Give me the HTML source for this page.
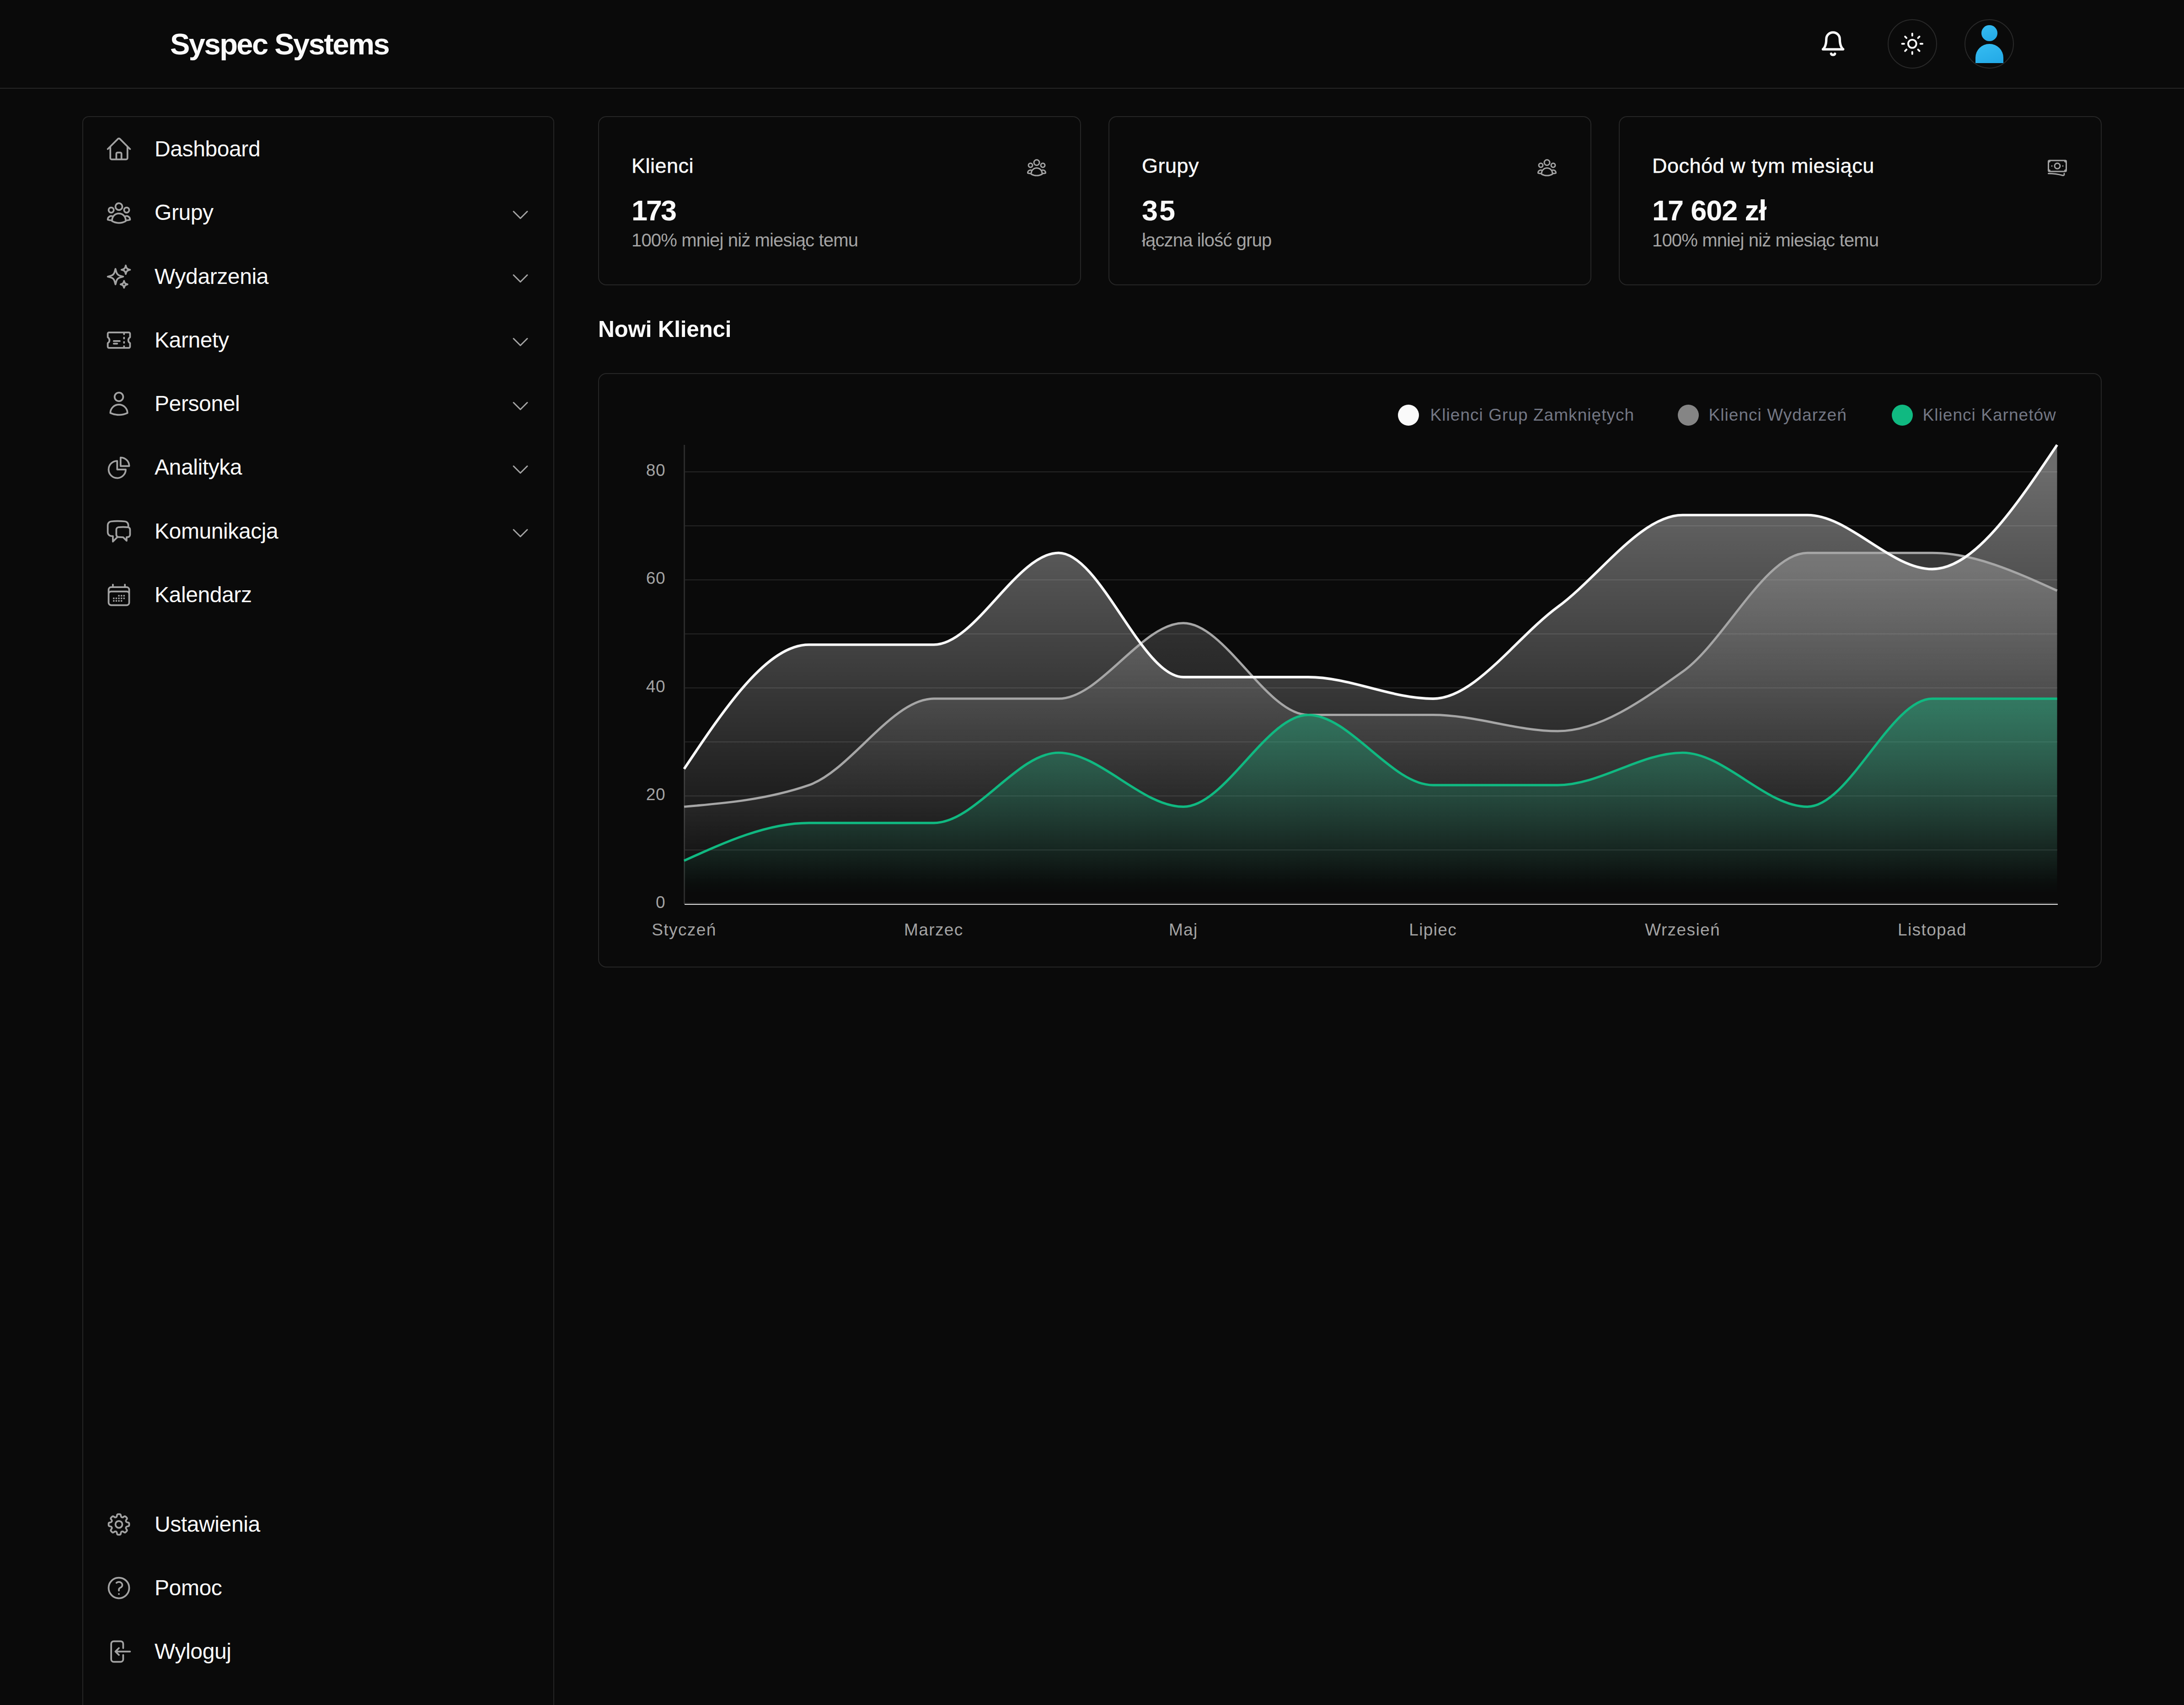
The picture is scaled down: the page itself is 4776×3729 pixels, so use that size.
<!DOCTYPE html><html><head><meta charset="utf-8"><style>
html,body{margin:0;padding:0;background:#0a0a0a;width:4776px;height:3729px;overflow:hidden;}
body{position:relative;font-family:"Liberation Sans", sans-serif;}
.t{position:absolute;line-height:1;white-space:nowrap;}
.box{position:absolute;box-sizing:border-box;border:2px solid #262626;border-radius:24px;}
</style></head><body>
<div style="position:absolute;left:0;top:192px;width:4776px;height:2px;background:#262626"></div>
<div class="t" style="left:372.0px;top:64.0px;font-size:65.0px;color:#fafafa;font-weight:700;letter-spacing:-2.50px;">Syspec Systems</div>
<svg style="position:absolute;left:3979.0px;top:66.0px;width:59px;height:59px" viewBox="0 0 24 24" fill="none" stroke="#fafafa" stroke-width="2.15" stroke-linecap="round" stroke-linejoin="round"><path d="M6 8a6 6 0 0 1 12 0c0 7 3 9 3 9H3s3-2 3-9"/><path d="M10.3 21a1.94 1.94 0 0 0 3.4 0"/></svg>
<div style="position:absolute;left:4128px;top:42px;width:108px;height:108px;box-sizing:border-box;border:2px solid #292929;border-radius:50%"></div>
<svg style="position:absolute;left:4155.2px;top:69.2px;width:53.5px;height:53.5px" viewBox="0 0 24 24" fill="none" stroke="#fafafa" stroke-width="1.75" stroke-linecap="round" stroke-linejoin="round"><circle cx="12" cy="12" r="4"/><path d="M12 2v2"/><path d="M12 20v2"/><path d="m4.93 4.93 1.41 1.41"/><path d="m17.66 17.66 1.41 1.41"/><path d="M2 12h2"/><path d="M20 12h2"/><path d="m6.34 17.66-1.41 1.41"/><path d="m19.07 4.93-1.41 1.41"/></svg>
<div style="position:absolute;left:4296px;top:42px;width:108px;height:108px;box-sizing:border-box;border:2px solid #292929;border-radius:50%"></div>
<div style="position:absolute;left:4333px;top:54.5px;width:34.5px;height:35px;border-radius:50%;background:linear-gradient(160deg,#36bdf2,#22a8e6)"></div>
<div style="position:absolute;left:4319.5px;top:96px;width:61px;height:41.5px;border-radius:30.5px 30.5px 0 0/30px 30px 0 0;background:linear-gradient(160deg,#36bdf2,#22a8e6)"></div>
<div class="box" style="left:180px;top:254px;width:1032px;height:3600px;border-color:#242424;border-radius:14px"></div>
<svg style="position:absolute;left:230.0px;top:296.0px;width:60.0px;height:60.0px" viewBox="0 0 24 24" fill="none" stroke="#a3a3a3" stroke-width="1.50" stroke-linecap="round" stroke-linejoin="round"><path d="m2.25 12 8.954-8.955c.44-.439 1.152-.439 1.591 0L21.75 12M4.5 9.75v10.125c0 .621.504 1.125 1.125 1.125H9.75v-4.875c0-.621.504-1.125 1.125-1.125h2.25c.621 0 1.125.504 1.125 1.125V21h4.125c.621 0 1.125-.504 1.125-1.125V9.75M8.25 21h8.25"/></svg>
<div class="t" style="left:338.0px;top:301.9px;font-size:48.0px;color:#fafafa;font-weight:400;letter-spacing:-0.40px;">Dashboard</div>
<svg style="position:absolute;left:230.0px;top:435.3px;width:60.0px;height:60.0px" viewBox="0 0 24 24" fill="none" stroke="#a3a3a3" stroke-width="1.50" stroke-linecap="round" stroke-linejoin="round"><path d="M18 18.72a9.094 9.094 0 0 0 3.741-.479 3 3 0 0 0-4.682-2.72m.94 3.198.001.031c0 .225-.012.447-.037.666A11.944 11.944 0 0 1 12 21c-2.17 0-4.207-.576-5.963-1.584A6.062 6.062 0 0 1 6 18.719m12 0a5.971 5.971 0 0 0-.941-3.197m0 0A5.995 5.995 0 0 0 12 12.75a5.995 5.995 0 0 0-5.058 2.772m0 0a3 3 0 0 0-4.681 2.72 8.986 8.986 0 0 0 3.74.477m.94-3.197a5.971 5.971 0 0 0-.94 3.197M15 6.75a3 3 0 1 1-6 0 3 3 0 0 1 6 0Zm6 3a2.25 2.25 0 1 1-4.5 0 2.25 2.25 0 0 1 4.5 0Zm-13.5 0a2.25 2.25 0 1 1-4.5 0 2.25 2.25 0 0 1 4.5 0Z"/></svg>
<div class="t" style="left:338.0px;top:441.2px;font-size:48.0px;color:#fafafa;font-weight:400;letter-spacing:-0.40px;">Grupy</div>
<svg style="position:absolute;left:1114.0px;top:445.8px;width:48.0px;height:48.0px" viewBox="0 0 24 24" fill="none" stroke="#a3a3a3" stroke-width="1.50" stroke-linecap="round" stroke-linejoin="round"><path d="m19.5 8.25-7.5 7.5-7.5-7.5"/></svg>
<svg style="position:absolute;left:230.0px;top:574.6px;width:60.0px;height:60.0px" viewBox="0 0 24 24" fill="none" stroke="#a3a3a3" stroke-width="1.50" stroke-linecap="round" stroke-linejoin="round"><path d="M9.813 15.904 9 18.75l-.813-2.846a4.5 4.5 0 0 0-3.09-3.09L2.25 12l2.846-.813a4.5 4.5 0 0 0 3.09-3.09L9 5.25l.813 2.846a4.5 4.5 0 0 0 3.09 3.09L15.75 12l-2.846.813a4.5 4.5 0 0 0-3.09 3.09ZM18.259 8.715 18 9.75l-.259-1.035a3.375 3.375 0 0 0-2.455-2.456L14.25 6l1.036-.259a3.375 3.375 0 0 0 2.455-2.456L18 2.25l.259 1.035a3.375 3.375 0 0 0 2.456 2.456L21.75 6l-1.035.259a3.375 3.375 0 0 0-2.456 2.456ZM16.894 20.567 16.5 21.75l-.394-1.183a2.25 2.25 0 0 0-1.423-1.423L13.5 18.75l1.183-.394a2.25 2.25 0 0 0 1.423-1.423l.394-1.183.394 1.183a2.25 2.25 0 0 0 1.423 1.423l1.183.394-1.183.394a2.25 2.25 0 0 0-1.423 1.423Z"/></svg>
<div class="t" style="left:338.0px;top:580.5px;font-size:48.0px;color:#fafafa;font-weight:400;letter-spacing:-0.40px;">Wydarzenia</div>
<svg style="position:absolute;left:1114.0px;top:585.1px;width:48.0px;height:48.0px" viewBox="0 0 24 24" fill="none" stroke="#a3a3a3" stroke-width="1.50" stroke-linecap="round" stroke-linejoin="round"><path d="m19.5 8.25-7.5 7.5-7.5-7.5"/></svg>
<svg style="position:absolute;left:230.0px;top:713.9px;width:60.0px;height:60.0px" viewBox="0 0 24 24" fill="none" stroke="#a3a3a3" stroke-width="1.50" stroke-linecap="round" stroke-linejoin="round"><path d="M16.5 6v.75m0 3v.75m0 3v.75m0 3V18m-9-5.25h5.25M7.5 15h3M3.375 5.25c-.621 0-1.125.504-1.125 1.125v3.026a2.999 2.999 0 0 1 0 5.198v3.026c0 .621.504 1.125 1.125 1.125h17.25c.621 0 1.125-.504 1.125-1.125v-3.026a2.999 2.999 0 0 1 0-5.198V6.375c0-.621-.504-1.125-1.125-1.125H3.375Z"/></svg>
<div class="t" style="left:338.0px;top:719.8px;font-size:48.0px;color:#fafafa;font-weight:400;letter-spacing:-0.40px;">Karnety</div>
<svg style="position:absolute;left:1114.0px;top:724.4px;width:48.0px;height:48.0px" viewBox="0 0 24 24" fill="none" stroke="#a3a3a3" stroke-width="1.50" stroke-linecap="round" stroke-linejoin="round"><path d="m19.5 8.25-7.5 7.5-7.5-7.5"/></svg>
<svg style="position:absolute;left:230.0px;top:853.2px;width:60.0px;height:60.0px" viewBox="0 0 24 24" fill="none" stroke="#a3a3a3" stroke-width="1.50" stroke-linecap="round" stroke-linejoin="round"><path d="M15.75 6a3.75 3.75 0 1 1-7.5 0 3.75 3.75 0 0 1 7.5 0ZM4.501 20.118a7.5 7.5 0 0 1 14.998 0A17.933 17.933 0 0 1 12 21.75c-2.676 0-5.216-.584-7.499-1.632Z"/></svg>
<div class="t" style="left:338.0px;top:859.1px;font-size:48.0px;color:#fafafa;font-weight:400;letter-spacing:-0.40px;">Personel</div>
<svg style="position:absolute;left:1114.0px;top:863.7px;width:48.0px;height:48.0px" viewBox="0 0 24 24" fill="none" stroke="#a3a3a3" stroke-width="1.50" stroke-linecap="round" stroke-linejoin="round"><path d="m19.5 8.25-7.5 7.5-7.5-7.5"/></svg>
<svg style="position:absolute;left:230.0px;top:992.5px;width:60.0px;height:60.0px" viewBox="0 0 24 24" fill="none" stroke="#a3a3a3" stroke-width="1.50" stroke-linecap="round" stroke-linejoin="round"><path d="M10.5 6a7.5 7.5 0 1 0 7.5 7.5h-7.5V6Z M13.5 10.5H21A7.5 7.5 0 0 0 13.5 3v7.5Z"/></svg>
<div class="t" style="left:338.0px;top:998.4px;font-size:48.0px;color:#fafafa;font-weight:400;letter-spacing:-0.40px;">Analityka</div>
<svg style="position:absolute;left:1114.0px;top:1003.0px;width:48.0px;height:48.0px" viewBox="0 0 24 24" fill="none" stroke="#a3a3a3" stroke-width="1.50" stroke-linecap="round" stroke-linejoin="round"><path d="m19.5 8.25-7.5 7.5-7.5-7.5"/></svg>
<svg style="position:absolute;left:230.0px;top:1131.8px;width:60.0px;height:60.0px" viewBox="0 0 24 24" fill="none" stroke="#a3a3a3" stroke-width="1.50" stroke-linecap="round" stroke-linejoin="round"><path d="M20.25 8.511c.884.284 1.5 1.128 1.5 2.097v4.286c0 1.136-.847 2.1-1.98 2.193-.34.027-.68.052-1.02.072v3.091l-3-3c-1.354 0-2.694-.055-4.02-.163a2.115 2.115 0 0 1-.825-.242m9.345-8.334a2.126 2.126 0 0 0-.476-.095 48.64 48.64 0 0 0-8.048 0c-1.131.094-1.976 1.057-1.976 2.192v4.286c0 .837.46 1.58 1.155 1.951m9.345-8.334V6.637c0-1.621-1.152-3.026-2.76-3.235A48.455 48.455 0 0 0 11.25 3c-2.115 0-4.198.137-6.24.402-1.608.209-2.76 1.614-2.76 3.235v6.226c0 1.621 1.152 3.026 2.76 3.235.577.075 1.157.14 1.74.194V21l4.155-4.155"/></svg>
<div class="t" style="left:338.0px;top:1137.7px;font-size:48.0px;color:#fafafa;font-weight:400;letter-spacing:-0.40px;">Komunikacja</div>
<svg style="position:absolute;left:1114.0px;top:1142.3px;width:48.0px;height:48.0px" viewBox="0 0 24 24" fill="none" stroke="#a3a3a3" stroke-width="1.50" stroke-linecap="round" stroke-linejoin="round"><path d="m19.5 8.25-7.5 7.5-7.5-7.5"/></svg>
<svg style="position:absolute;left:230.0px;top:1271.1px;width:60.0px;height:60.0px" viewBox="0 0 24 24" fill="none" stroke="#a3a3a3" stroke-width="1.50" stroke-linecap="round" stroke-linejoin="round"><path d="M6.75 3v2.25M17.25 3v2.25M3 18.75V7.5a2.25 2.25 0 0 1 2.25-2.25h13.5A2.25 2.25 0 0 1 21 7.5v11.25m-18 0A2.25 2.25 0 0 0 5.25 21h13.5A2.25 2.25 0 0 0 21 18.75m-18 0v-7.5A2.25 2.25 0 0 1 5.25 9h13.5A2.25 2.25 0 0 1 21 11.25v7.5m-9-6h.008v.008H12v-.008ZM12 15h.008v.008H12V15Zm0 2.25h.008v.008H12v-.008ZM9.75 15h.008v.008H9.75V15Zm0 2.25h.008v.008H9.75v-.008ZM7.5 15h.008v.008H7.5V15Zm0 2.25h.008v.008H7.5v-.008Zm6.75-4.5h.008v.008h-.008v-.008Zm0 2.25h.008v.008h-.008V15Zm0 2.25h.008v.008h-.008v-.008Zm2.25-4.5h.008v.008H16.5v-.008Zm0 2.25h.008v.008H16.5V15Z"/></svg>
<div class="t" style="left:338.0px;top:1277.0px;font-size:48.0px;color:#fafafa;font-weight:400;letter-spacing:-0.40px;">Kalendarz</div>
<svg style="position:absolute;left:230.0px;top:3304.0px;width:60.0px;height:60.0px" viewBox="0 0 24 24" fill="none" stroke="#a3a3a3" stroke-width="1.50" stroke-linecap="round" stroke-linejoin="round"><path d="M10.343 3.94c.09-.542.56-.94 1.11-.94h1.093c.55 0 1.02.398 1.11.94l.149.894c.07.424.384.764.78.93.398.164.855.142 1.205-.108l.737-.527a1.125 1.125 0 0 1 1.45.12l.773.774c.39.389.44 1.002.12 1.45l-.527.737c-.25.35-.272.806-.107 1.204.165.397.505.71.93.78l.893.15c.543.09.94.559.94 1.109v1.094c0 .55-.397 1.02-.94 1.11l-.894.149c-.424.07-.764.383-.929.78-.165.398-.143.854.107 1.204l.527.738c.32.447.269 1.06-.12 1.45l-.774.773a1.125 1.125 0 0 1-1.449.12l-.738-.527c-.35-.25-.806-.272-1.203-.107-.398.165-.71.505-.781.929l-.149.894c-.09.542-.56.94-1.11.94h-1.094c-.55 0-1.019-.398-1.11-.94l-.148-.894c-.071-.424-.384-.764-.781-.93-.398-.164-.854-.142-1.204.108l-.738.527c-.447.32-1.06.269-1.45-.12l-.773-.774a1.125 1.125 0 0 1-.12-1.45l.527-.737c.25-.35.272-.806.108-1.204-.165-.397-.506-.71-.93-.78l-.894-.15c-.542-.09-.94-.56-.94-1.109v-1.094c0-.55.398-1.02.94-1.11l.894-.149c.424-.07.765-.383.93-.78.165-.398.143-.854-.108-1.204l-.526-.738a1.125 1.125 0 0 1 .12-1.45l.773-.773a1.125 1.125 0 0 1 1.45-.12l.737.527c.35.25.807.272 1.204.107.397-.165.71-.505.78-.929l.15-.894Z M15 12a3 3 0 1 1-6 0 3 3 0 0 1 6 0Z"/></svg>
<div class="t" style="left:338.0px;top:3309.9px;font-size:48.0px;color:#fafafa;font-weight:400;letter-spacing:-0.40px;">Ustawienia</div>
<svg style="position:absolute;left:230.0px;top:3443.0px;width:60.0px;height:60.0px" viewBox="0 0 24 24" fill="none" stroke="#a3a3a3" stroke-width="1.50" stroke-linecap="round" stroke-linejoin="round"><path d="M9.879 7.519c1.171-1.025 3.071-1.025 4.242 0 1.172 1.025 1.172 2.687 0 3.712-.203.179-.43.326-.67.442-.745.361-1.45.999-1.45 1.827v.75M21 12a9 9 0 1 1-18 0 9 9 0 0 1 18 0Zm-9 5.25h.008v.008H12v-.008Z"/></svg>
<div class="t" style="left:338.0px;top:3448.9px;font-size:48.0px;color:#fafafa;font-weight:400;letter-spacing:-0.40px;">Pomoc</div>
<svg style="position:absolute;left:230.0px;top:3582.0px;width:60.0px;height:60.0px" viewBox="0 0 24 24" fill="none" stroke="#a3a3a3" stroke-width="1.50" stroke-linecap="round" stroke-linejoin="round"><path d="M15.75 9V5.25A2.25 2.25 0 0 0 13.5 3h-6a2.25 2.25 0 0 0-2.25 2.25v13.5A2.25 2.25 0 0 0 7.5 21h6a2.25 2.25 0 0 0 2.25-2.25V15M12 9l-3 3m0 0 3 3m-3-3h12.75"/></svg>
<div class="t" style="left:338.0px;top:3587.9px;font-size:48.0px;color:#fafafa;font-weight:400;letter-spacing:-0.40px;">Wyloguj</div>
<div class="box" style="left:1308px;top:254px;width:1056px;height:370px;border-radius:18px"></div>
<div class="t" style="left:1381.0px;top:340.4px;font-size:45.0px;color:#fafafa;font-weight:400;letter-spacing:0.50px;-webkit-text-stroke:0.5px #fafafa;">Klienci</div>
<div class="t" style="left:1381.0px;top:428.7px;font-size:63.0px;color:#fafafa;font-weight:700;letter-spacing:-3.00px;">173</div>
<div class="t" style="left:1381.0px;top:504.6px;font-size:40.0px;color:#a3a3a3;font-weight:400;letter-spacing:-0.85px;">100% mniej niż miesiąc temu</div>
<svg style="position:absolute;left:2243.0px;top:342.0px;width:48.0px;height:48.0px" viewBox="0 0 24 24" fill="none" stroke="#a3a3a3" stroke-width="1.50" stroke-linecap="round" stroke-linejoin="round"><path d="M18 18.72a9.094 9.094 0 0 0 3.741-.479 3 3 0 0 0-4.682-2.72m.94 3.198.001.031c0 .225-.012.447-.037.666A11.944 11.944 0 0 1 12 21c-2.17 0-4.207-.576-5.963-1.584A6.062 6.062 0 0 1 6 18.719m12 0a5.971 5.971 0 0 0-.941-3.197m0 0A5.995 5.995 0 0 0 12 12.75a5.995 5.995 0 0 0-5.058 2.772m0 0a3 3 0 0 0-4.681 2.72 8.986 8.986 0 0 0 3.74.477m.94-3.197a5.971 5.971 0 0 0-.94 3.197M15 6.75a3 3 0 1 1-6 0 3 3 0 0 1 6 0Zm6 3a2.25 2.25 0 1 1-4.5 0 2.25 2.25 0 0 1 4.5 0Zm-13.5 0a2.25 2.25 0 1 1-4.5 0 2.25 2.25 0 0 1 4.5 0Z"/></svg>
<div class="box" style="left:2424px;top:254px;width:1056px;height:370px;border-radius:18px"></div>
<div class="t" style="left:2497.0px;top:340.4px;font-size:45.0px;color:#fafafa;font-weight:400;letter-spacing:0.50px;-webkit-text-stroke:0.5px #fafafa;">Grupy</div>
<div class="t" style="left:2497.0px;top:428.7px;font-size:63.0px;color:#fafafa;font-weight:700;letter-spacing:3.00px;">35</div>
<div class="t" style="left:2497.0px;top:504.6px;font-size:40.0px;color:#a3a3a3;font-weight:400;letter-spacing:-0.85px;">łączna ilość grup</div>
<svg style="position:absolute;left:3359.0px;top:342.0px;width:48.0px;height:48.0px" viewBox="0 0 24 24" fill="none" stroke="#a3a3a3" stroke-width="1.50" stroke-linecap="round" stroke-linejoin="round"><path d="M18 18.72a9.094 9.094 0 0 0 3.741-.479 3 3 0 0 0-4.682-2.72m.94 3.198.001.031c0 .225-.012.447-.037.666A11.944 11.944 0 0 1 12 21c-2.17 0-4.207-.576-5.963-1.584A6.062 6.062 0 0 1 6 18.719m12 0a5.971 5.971 0 0 0-.941-3.197m0 0A5.995 5.995 0 0 0 12 12.75a5.995 5.995 0 0 0-5.058 2.772m0 0a3 3 0 0 0-4.681 2.72 8.986 8.986 0 0 0 3.74.477m.94-3.197a5.971 5.971 0 0 0-.94 3.197M15 6.75a3 3 0 1 1-6 0 3 3 0 0 1 6 0Zm6 3a2.25 2.25 0 1 1-4.5 0 2.25 2.25 0 0 1 4.5 0Zm-13.5 0a2.25 2.25 0 1 1-4.5 0 2.25 2.25 0 0 1 4.5 0Z"/></svg>
<div class="box" style="left:3540px;top:254px;width:1056px;height:370px;border-radius:18px"></div>
<div class="t" style="left:3613.0px;top:340.4px;font-size:45.0px;color:#fafafa;font-weight:400;letter-spacing:0.50px;-webkit-text-stroke:0.5px #fafafa;">Dochód w tym miesiącu</div>
<div class="t" style="left:3613.0px;top:428.7px;font-size:63.0px;color:#fafafa;font-weight:700;letter-spacing:-1.10px;">17 602 zł</div>
<div class="t" style="left:3613.0px;top:504.6px;font-size:40.0px;color:#a3a3a3;font-weight:400;letter-spacing:-0.85px;">100% mniej niż miesiąc temu</div>
<svg style="position:absolute;left:4475.0px;top:342.0px;width:48.0px;height:48.0px" viewBox="0 0 24 24" fill="none" stroke="#a3a3a3" stroke-width="1.50" stroke-linecap="round" stroke-linejoin="round"><path d="M2.25 18.75a60.07 60.07 0 0 1 15.797 2.101c.727.198 1.453-.342 1.453-1.096V18.75M3.75 4.5v.75A.75.75 0 0 1 3 6h-.75m0 0v-.375c0-.621.504-1.125 1.125-1.125H20.25M2.25 6v9m18-10.5v.75c0 .414.336.75.75.75h.75m-1.5-1.5h.375c.621 0 1.125.504 1.125 1.125v9.75c0 .621-.504 1.125-1.125 1.125h-.375m1.5-1.5H21a.75.75 0 0 0-.75.75v.75m0 0H3.75m0 0h-.375a1.125 1.125 0 0 1-1.125-1.125V15m1.5 1.5v-.75A.75.75 0 0 0 3 15h-.75M15 10.5a3 3 0 1 1-6 0 3 3 0 0 1 6 0Zm3 0h.008v.008H18V10.5Zm-12 0h.008v.008H6V10.5Z"/></svg>
<div class="t" style="left:1308.0px;top:694.6px;font-size:49.5px;color:#fafafa;font-weight:700;letter-spacing:-0.25px;">Nowi Klienci</div>
<div class="box" style="left:1308px;top:816px;width:3288px;height:1300px;border-radius:18px"></div>
<div style="position:absolute;left:3057px;top:885px;width:46px;height:46px;border-radius:50%;background:#fafafa"></div>
<div class="t" style="left:3127.5px;top:888.5px;font-size:37.0px;color:#737784;font-weight:400;letter-spacing:1.05px;">Klienci Grup Zamkniętych</div>
<div style="position:absolute;left:3669px;top:885px;width:46px;height:46px;border-radius:50%;background:#858585"></div>
<div class="t" style="left:3736.5px;top:888.5px;font-size:37.0px;color:#737784;font-weight:400;letter-spacing:1.05px;">Klienci Wydarzeń</div>
<div style="position:absolute;left:4137px;top:885px;width:46px;height:46px;border-radius:50%;background:#10b981"></div>
<div class="t" style="left:4204.5px;top:888.5px;font-size:37.0px;color:#737784;font-weight:400;letter-spacing:1.05px;">Klienci Karnetów</div>
<svg style="position:absolute;left:0;top:0" width="4776" height="3729" viewBox="0 0 4776 3729"><defs><linearGradient id="gw" x1="0" y1="0" x2="0" y2="1"><stop offset="5%" stop-color="#ffffff" stop-opacity="0.4"/><stop offset="95%" stop-color="#ffffff" stop-opacity="0"/></linearGradient><linearGradient id="gg" x1="0" y1="0" x2="0" y2="1"><stop offset="5%" stop-color="#a3a3a3" stop-opacity="0.3"/><stop offset="95%" stop-color="#a3a3a3" stop-opacity="0"/></linearGradient><linearGradient id="ge" x1="0" y1="0" x2="0" y2="1"><stop offset="5%" stop-color="#10b981" stop-opacity="0.4"/><stop offset="95%" stop-color="#10b981" stop-opacity="0"/></linearGradient></defs><rect x="1496" y="1857.9" width="3003" height="2" fill="#262626"/><rect x="1496" y="1739.8" width="3003" height="2" fill="#262626"/><rect x="1496" y="1621.6" width="3003" height="2" fill="#262626"/><rect x="1496" y="1503.5" width="3003" height="2" fill="#262626"/><rect x="1496" y="1385.4" width="3003" height="2" fill="#262626"/><rect x="1496" y="1267.2" width="3003" height="2" fill="#262626"/><rect x="1496" y="1149.1" width="3003" height="2" fill="#262626"/><rect x="1496" y="1031.0" width="3003" height="2" fill="#262626"/><rect x="1495" y="973" width="3" height="1004" fill="#2c2c2c"/><path d="M1496.00,1764.38C1586.98,1756.50 1677.97,1748.62 1768.95,1717.12C1859.94,1685.62 1950.92,1528.12 2041.91,1528.12C2132.89,1528.12 2223.88,1528.12 2314.86,1528.12C2405.85,1528.12 2496.83,1362.75 2587.82,1362.75C2678.80,1362.75 2769.79,1563.56 2860.77,1563.56C2951.76,1563.56 3042.74,1563.56 3133.73,1563.56C3224.71,1563.56 3315.70,1599.00 3406.68,1599.00C3497.67,1599.00 3588.65,1534.03 3679.64,1469.06C3770.62,1404.09 3861.61,1209.19 3952.59,1209.19C4043.58,1209.19 4134.56,1209.19 4225.55,1209.19C4316.53,1209.19 4407.52,1250.53 4498.50,1291.88L4498.50,1977.00L1496.00,1977.00Z" fill="url(#gg)"/><path d="M1496.00,1681.69C1586.98,1545.84 1677.97,1410.00 1768.95,1410.00C1859.94,1410.00 1950.92,1410.00 2041.91,1410.00C2132.89,1410.00 2223.88,1209.19 2314.86,1209.19C2405.85,1209.19 2496.83,1480.88 2587.82,1480.88C2678.80,1480.88 2769.79,1480.88 2860.77,1480.88C2951.76,1480.88 3042.74,1528.12 3133.73,1528.12C3224.71,1528.12 3315.70,1394.25 3406.68,1327.31C3497.67,1260.38 3588.65,1126.50 3679.64,1126.50C3770.62,1126.50 3861.61,1126.50 3952.59,1126.50C4043.58,1126.50 4134.56,1244.62 4225.55,1244.62C4316.53,1244.62 4407.52,1108.78 4498.50,972.94L4498.50,1977.00L1496.00,1977.00Z" fill="url(#gw)"/><path d="M1496.00,1882.50C1586.98,1841.16 1677.97,1799.81 1768.95,1799.81C1859.94,1799.81 1950.92,1799.81 2041.91,1799.81C2132.89,1799.81 2223.88,1646.25 2314.86,1646.25C2405.85,1646.25 2496.83,1764.38 2587.82,1764.38C2678.80,1764.38 2769.79,1563.56 2860.77,1563.56C2951.76,1563.56 3042.74,1717.12 3133.73,1717.12C3224.71,1717.12 3315.70,1717.12 3406.68,1717.12C3497.67,1717.12 3588.65,1646.25 3679.64,1646.25C3770.62,1646.25 3861.61,1764.38 3952.59,1764.38C4043.58,1764.38 4134.56,1528.12 4225.55,1528.12C4316.53,1528.12 4407.52,1528.12 4498.50,1528.12L4498.50,1977.00L1496.00,1977.00Z" fill="url(#ge)"/><path d="M1496.00,1764.38C1586.98,1756.50 1677.97,1748.62 1768.95,1717.12C1859.94,1685.62 1950.92,1528.12 2041.91,1528.12C2132.89,1528.12 2223.88,1528.12 2314.86,1528.12C2405.85,1528.12 2496.83,1362.75 2587.82,1362.75C2678.80,1362.75 2769.79,1563.56 2860.77,1563.56C2951.76,1563.56 3042.74,1563.56 3133.73,1563.56C3224.71,1563.56 3315.70,1599.00 3406.68,1599.00C3497.67,1599.00 3588.65,1534.03 3679.64,1469.06C3770.62,1404.09 3861.61,1209.19 3952.59,1209.19C4043.58,1209.19 4134.56,1209.19 4225.55,1209.19C4316.53,1209.19 4407.52,1250.53 4498.50,1291.88" fill="none" stroke="#a6a6a6" stroke-width="5" stroke-linejoin="round"/><path d="M1496.00,1681.69C1586.98,1545.84 1677.97,1410.00 1768.95,1410.00C1859.94,1410.00 1950.92,1410.00 2041.91,1410.00C2132.89,1410.00 2223.88,1209.19 2314.86,1209.19C2405.85,1209.19 2496.83,1480.88 2587.82,1480.88C2678.80,1480.88 2769.79,1480.88 2860.77,1480.88C2951.76,1480.88 3042.74,1528.12 3133.73,1528.12C3224.71,1528.12 3315.70,1394.25 3406.68,1327.31C3497.67,1260.38 3588.65,1126.50 3679.64,1126.50C3770.62,1126.50 3861.61,1126.50 3952.59,1126.50C4043.58,1126.50 4134.56,1244.62 4225.55,1244.62C4316.53,1244.62 4407.52,1108.78 4498.50,972.94" fill="none" stroke="#fafafa" stroke-width="5.6" stroke-linejoin="round"/><path d="M1496.00,1882.50C1586.98,1841.16 1677.97,1799.81 1768.95,1799.81C1859.94,1799.81 1950.92,1799.81 2041.91,1799.81C2132.89,1799.81 2223.88,1646.25 2314.86,1646.25C2405.85,1646.25 2496.83,1764.38 2587.82,1764.38C2678.80,1764.38 2769.79,1563.56 2860.77,1563.56C2951.76,1563.56 3042.74,1717.12 3133.73,1717.12C3224.71,1717.12 3315.70,1717.12 3406.68,1717.12C3497.67,1717.12 3588.65,1646.25 3679.64,1646.25C3770.62,1646.25 3861.61,1764.38 3952.59,1764.38C4043.58,1764.38 4134.56,1528.12 4225.55,1528.12C4316.53,1528.12 4407.52,1528.12 4498.50,1528.12" fill="none" stroke="#10b981" stroke-width="5.2" stroke-linejoin="round"/><rect x="1497" y="1974" width="3002" height="1" fill="#262626"/><rect x="1497" y="1976.8" width="3003" height="2" fill="#f0f0f0"/></svg>
<div class="t" style="right:3321.0px;top:1955.2px;font-size:37.0px;color:#a3a3a3;font-weight:400;letter-spacing:0.50px;">0</div>
<div class="t" style="right:3321.0px;top:1718.9px;font-size:37.0px;color:#a3a3a3;font-weight:400;letter-spacing:0.50px;">20</div>
<div class="t" style="right:3321.0px;top:1482.7px;font-size:37.0px;color:#a3a3a3;font-weight:400;letter-spacing:0.50px;">40</div>
<div class="t" style="right:3321.0px;top:1246.4px;font-size:37.0px;color:#a3a3a3;font-weight:400;letter-spacing:0.50px;">60</div>
<div class="t" style="right:3321.0px;top:1010.2px;font-size:37.0px;color:#a3a3a3;font-weight:400;letter-spacing:0.50px;">80</div>
<div class="t" style="left:1496.0px;transform:translateX(-50%);top:2014.9px;font-size:37.0px;color:#a3a3a3;font-weight:400;letter-spacing:1.40px;">Styczeń</div>
<div class="t" style="left:2041.9px;transform:translateX(-50%);top:2014.9px;font-size:37.0px;color:#a3a3a3;font-weight:400;letter-spacing:1.40px;">Marzec</div>
<div class="t" style="left:2587.8px;transform:translateX(-50%);top:2014.9px;font-size:37.0px;color:#a3a3a3;font-weight:400;letter-spacing:1.40px;">Maj</div>
<div class="t" style="left:3133.7px;transform:translateX(-50%);top:2014.9px;font-size:37.0px;color:#a3a3a3;font-weight:400;letter-spacing:1.40px;">Lipiec</div>
<div class="t" style="left:3679.6px;transform:translateX(-50%);top:2014.9px;font-size:37.0px;color:#a3a3a3;font-weight:400;letter-spacing:1.40px;">Wrzesień</div>
<div class="t" style="left:4225.5px;transform:translateX(-50%);top:2014.9px;font-size:37.0px;color:#a3a3a3;font-weight:400;letter-spacing:1.40px;">Listopad</div>
</body></html>
